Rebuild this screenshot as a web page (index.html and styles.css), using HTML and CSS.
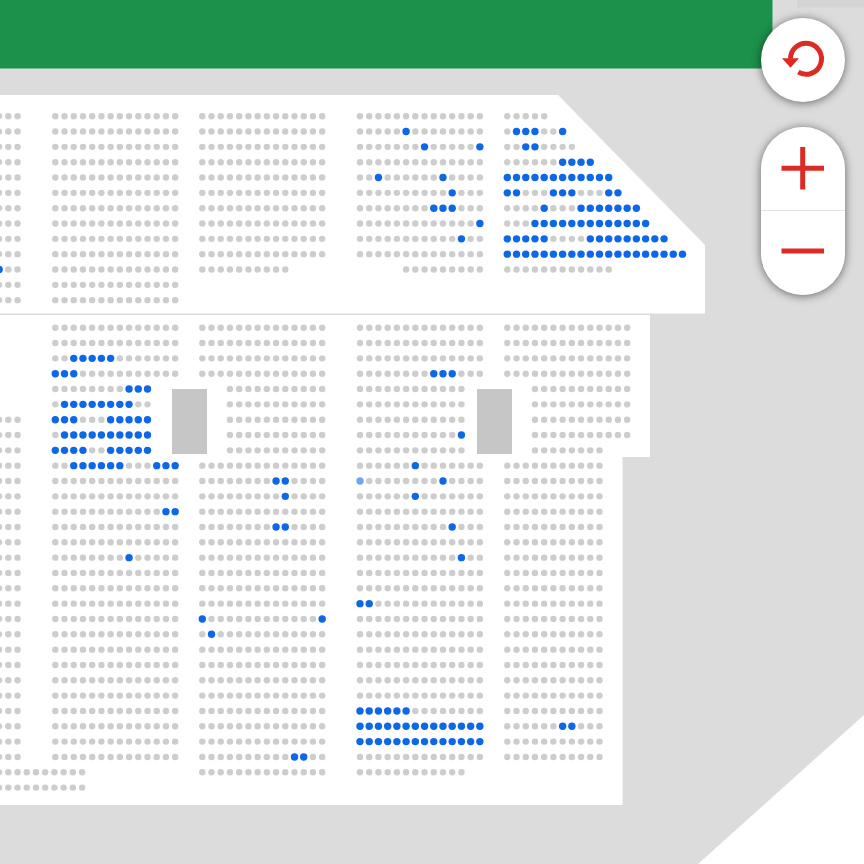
FILE: index.html
```html
<!DOCTYPE html>
<html lang="en">
<head>
  <meta charset="UTF-8">
  <meta name="viewport" content="width=device-width, initial-scale=1.0">
  <title>Seat map</title>
  <link rel="stylesheet" href="styles.css">
</head>
<body>
  <div class="map">
    <svg class="map-canvas" id="map-canvas" viewBox="0 0 864 864" width="864" height="864">
      <rect class="roof-strip" x="797" y="0" width="67" height="7.5"></rect>
      <rect class="stage" x="0" y="0" width="772.5" height="68.5"></rect>
      <polygon class="outside" points="864,715 698,864 864,864"></polygon>
      <polygon class="floor" points="0,95 558,95 705,245 705,313.4 0,313.4"></polygon>
      <polygon class="floor" points="0,315 650,315 650,457 622.5,457 622.5,805 0,805"></polygon>
      <rect class="pillar" x="172" y="389" width="35" height="65"></rect>
      <rect class="pillar" x="477" y="389" width="35" height="65"></rect>
    </svg>

    <button class="map-btn reset-btn" type="button" aria-label="Reset">
      <svg viewBox="0 0 84 84" width="84" height="84">
        <path class="icon-line" d="M29.5 40.7 A15.5 15.5 0 1 1 37.3 54.2"></path>
        <polygon class="icon-fill" points="21,40.3 38,40.3 29.5,49.8"></polygon>
      </svg>
    </button>

    <div class="zoom-group">
      <button class="map-btn zoom-btn" type="button" aria-label="Zoom in">
        <svg viewBox="0 0 84 84" width="84" height="84">
          <path class="icon-line" d="M20.5 41.3 H63 M41.7 20 V62.5"></path>
        </svg>
      </button>
      <button class="map-btn zoom-btn" type="button" aria-label="Zoom out">
        <svg viewBox="0 0 84 84" width="84" height="84">
          <path class="icon-line" d="M20.5 40 H63"></path>
        </svg>
      </button>
    </div>
  </div>

  <script src="seats.js"></script>
</body>
</html>
```

FILE: styles.css
```css
:root {
  --ground: #dcdcdc;
  --floor: #ffffff;
  --stage: #1c914b;
  --seat: #cdcdcd;
  --seat-taken: #0e67e6;
  --seat-picked: #6ea6f2;
  --pillar: #c6c6c6;
  --accent: #dc2a24;
}

* {
  margin: 0;
  padding: 0;
  box-sizing: border-box;
}

body {
  background-color: var(--ground);
  overflow: hidden;
}

.map {
  position: relative;
  width: 864px;
  height: 864px;
}

.map-canvas {
  display: block;
}

.stage {
  fill: var(--stage);
}

.roof-strip {
  fill: #d4d4d4;
}

.floor,
.outside {
  fill: var(--floor);
}

.pillar {
  fill: var(--pillar);
}

.seat {
  r: 3.2px;
  fill: var(--seat);
}

.seat-taken {
  r: 3.7px;
  fill: var(--seat-taken);
}

.seat-picked {
  r: 3.7px;
  fill: var(--seat-picked);
}

.map-btn {
  display: block;
  width: 84px;
  height: 84px;
  border: none;
  background: var(--floor);
  cursor: pointer;
}

.map-btn svg {
  display: block;
}

.reset-btn {
  position: absolute;
  left: 761px;
  top: 18px;
  border-radius: 50%;
  box-shadow: 0 1px 10px rgba(0, 0, 0, 0.55);
}

.zoom-group {
  position: absolute;
  left: 761px;
  top: 127px;
  width: 84px;
  border-radius: 42px;
  overflow: hidden;
  box-shadow: 0 1px 10px rgba(0, 0, 0, 0.55);
}

.zoom-btn:first-child {
  border-bottom: 1px solid #e2e2e2;
}

.icon-line {
  fill: none;
  stroke: var(--accent);
  stroke-width: 5;
}

.icon-fill {
  fill: var(--accent);
}
```

FILE: seats.js
```js
const COL = 9.22;
const ROW = 15.33;
const UPPER = 116.2;
const LOWER = 327.7;

// o = free, x = taken, l = picked, space = no seat
const blocks = [
  { x: -0.9, y: UPPER, rows: [
    'ooo', 'ooo', 'ooo', 'ooo', 'ooo', 'ooo', 'ooo', 'ooo', 'ooo', 'ooo', 'xoo', 'ooo', 'ooo'
  ] },
  { x: -0.9, y: LOWER + 6 * ROW, rows: [
    'ooo', 'ooo', 'ooo', 'ooo', 'ooo', 'ooo', 'ooo', 'ooo', 'ooo', 'ooo', 'ooo', 'ooo',
    'ooo', 'ooo', 'ooo', 'ooo', 'ooo', 'ooo', 'ooo', 'ooo', 'ooo', 'ooo', 'ooo',
    'oooooooooo', 'oooooooooo'
  ] },
  { x: 55.3, y: UPPER, rows: [
    'oooooooooooooo', 'oooooooooooooo', 'oooooooooooooo', 'oooooooooooooo', 'oooooooooooooo',
    'oooooooooooooo', 'oooooooooooooo', 'oooooooooooooo', 'oooooooooooooo', 'oooooooooooooo',
    'oooooooooooooo', 'oooooooooooooo', 'oooooooooooooo'
  ] },
  { x: 55.3, y: LOWER, rows: [
    'oooooooooooooo',
    'oooooooooooooo',
    'ooxxxxxooooooo',
    'xxxooooooooooo',
    'ooooooooxxx',
    'oxxxxxxxxoo',
    'xxxoooxxxxx',
    'oxxxxxxxxxx',
    'xxxxooxxxxx',
    'ooxxxxxxoooxxx',
    'oooooooooooooo',
    'oooooooooooooo',
    'ooooooooooooxx',
    'oooooooooooooo',
    'oooooooooooooo',
    'ooooooooxooooo',
    'oooooooooooooo', 'oooooooooooooo', 'oooooooooooooo', 'oooooooooooooo',
    'oooooooooooooo', 'oooooooooooooo', 'oooooooooooooo', 'oooooooooooooo',
    'oooooooooooooo', 'oooooooooooooo', 'oooooooooooooo', 'oooooooooooooo',
    'oooooooooooooo'
  ] },
  { x: 202.3, y: UPPER, rows: [
    'oooooooooooooo', 'oooooooooooooo', 'oooooooooooooo', 'oooooooooooooo', 'oooooooooooooo',
    'oooooooooooooo', 'oooooooooooooo', 'oooooooooooooo', 'oooooooooooooo', 'oooooooooooooo',
    'oooooooooo'
  ] },
  { x: 202.3, y: LOWER, rows: [
    'oooooooooooooo', 'oooooooooooooo', 'oooooooooooooo', 'oooooooooooooo',
    '   ooooooooooo', '   ooooooooooo', '   ooooooooooo', '   ooooooooooo', '   ooooooooooo',
    'oooooooooooooo',
    'ooooooooxxoooo',
    'oooooooooxoooo',
    'oooooooooooooo',
    'ooooooooxxoooo',
    'oooooooooooooo', 'oooooooooooooo', 'oooooooooooooo', 'oooooooooooooo', 'oooooooooooooo',
    'xoooooooooooox',
    'oxoooooooooooo',
    'oooooooooooooo', 'oooooooooooooo', 'oooooooooooooo', 'oooooooooooooo',
    'oooooooooooooo', 'oooooooooooooo', 'oooooooooooooo',
    'ooooooooooxxoo',
    'oooooooooooooo'
  ] },
  { x: 360, y: UPPER, rows: [
    'oooooooooooooo',
    'oooooxoooooooo',
    'oooooooxooooox',
    'oooooooooooooo',
    'ooxooooooxoooo',
    'ooooooooooxooo',
    'ooooooooxxxooo',
    'ooooooooooooox',
    'oooooooooooxoo',
    'oooooooooooooo',
    '     ooooooooo'
  ] },
  { x: 360, y: LOWER, rows: [
    'oooooooooooooo', 'oooooooooooooo', 'oooooooooooooo',
    'ooooooooxxxooo',
    'oooooooooooo', 'oooooooooooo', 'oooooooooooo',
    'ooooooooooox',
    'oooooooooooo',
    'ooooooxooooooo',
    'looooooooxoooo',
    'ooooooxooooooo',
    'oooooooooooooo',
    'ooooooooooxooo',
    'oooooooooooooo',
    'oooooooooooxoo',
    'oooooooooooooo', 'oooooooooooooo',
    'xxoooooooooooo',
    'oooooooooooooo', 'oooooooooooooo', 'oooooooooooooo',
    'oooooooooooooo', 'oooooooooooooo', 'oooooooooooooo',
    'xxxxxxoooooooo',
    'xxxxxxxxxxxxxx',
    'xxxxxxxxxxxxxx',
    'oooooooooooooo',
    'oooooooooooo'
  ] },
  { x: 507.3, y: UPPER, rows: [
    'ooooo',
    'oxxxoox',
    'ooxxoooo',
    'ooooooxxxx',
    'xxxxxxxxxxxx',
    'xxoooxxxoooxx',
    'ooooxoooxxxxxxx',
    'oooxxxxxxxxxxxxx',
    'xxxxxooooxxxxxxxxx',
    'xxxxxxxxxxxxxxxxxxxx',
    'oooooooooooo'
  ] },
  { x: 507.3, y: LOWER, rows: [
    'oooooooooooooo', 'oooooooooooooo', 'oooooooooooooo', 'oooooooooooooo',
    '   ooooooooooo', '   ooooooooooo', '   ooooooooooo', '   ooooooooooo',
    '   oooooooo',
    'ooooooooooo', 'ooooooooooo', 'ooooooooooo', 'ooooooooooo', 'ooooooooooo', 'ooooooooooo',
    'ooooooooooo', 'ooooooooooo', 'ooooooooooo', 'ooooooooooo', 'ooooooooooo', 'ooooooooooo',
    'ooooooooooo', 'ooooooooooo', 'ooooooooooo', 'ooooooooooo', 'ooooooooooo',
    'ooooooxxooo',
    'ooooooooooo', 'ooooooooooo'
  ] }
];

const seatClass = { o: 'seat', x: 'seat seat-taken', l: 'seat seat-picked' };
const canvas = document.getElementById('map-canvas');

blocks.forEach(block => {
  block.rows.forEach((row, r) => {
    [...row].forEach((mark, c) => {
      if (mark === ' ') return;
      const seat = document.createElementNS('http://www.w3.org/2000/svg', 'circle');
      seat.setAttribute('cx', block.x + c * COL);
      seat.setAttribute('cy', block.y + r * ROW);
      seat.setAttribute('class', seatClass[mark]);
      canvas.appendChild(seat);
    });
  });
});
```
